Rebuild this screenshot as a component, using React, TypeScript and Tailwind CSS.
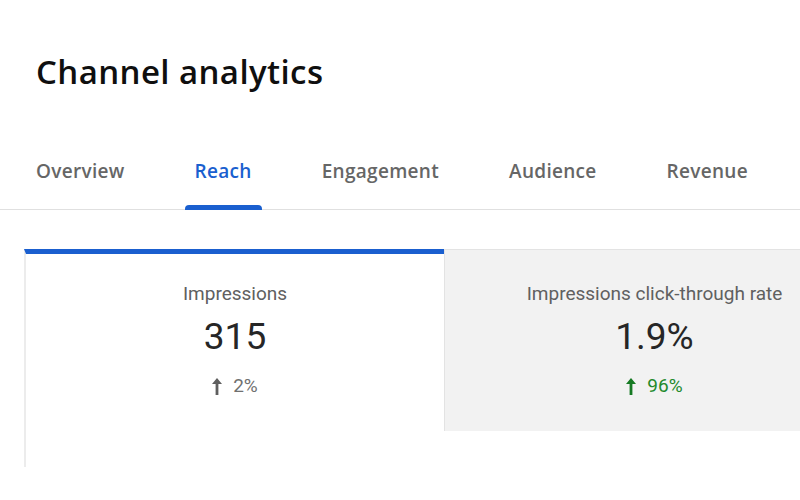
import React from 'react';

const tabs = ['Overview', 'Reach', 'Engagement', 'Audience', 'Revenue'];

function ArrowUp({ className }: { className?: string }) {
  return (
    <svg viewBox="0 0 10 17" className={className} fill="currentColor" aria-hidden>
      <path d="M5 0 L10 6 L6.4 6 L6.4 17 L3.6 17 L3.6 6 L0 6 Z" />
    </svg>
  );
}

type Metric = {
  label: string;
  value: string;
  delta: string;
  positive?: boolean;
};

function MetricBody({ m }: { m: Metric }) {
  return (
    <div className="flex flex-col items-center font-['Roboto',sans-serif]">
      <div className="text-[19px] leading-[24px] text-[#606060]">{m.label}</div>
      <div className="mt-[9px] text-[37px] leading-[44px] text-[#262626]">{m.value}</div>
      <div
        className={
          m.positive
            ? 'mt-[15px] flex items-center gap-[11px] text-[19px] leading-[24px] text-[#238a2c]'
            : 'mt-[15px] flex items-center gap-[11px] text-[19px] leading-[24px] text-[#707070]'
        }
      >
        <ArrowUp
          className={m.positive ? 'h-[17px] w-[10px] text-[#167a23]' : 'h-[17px] w-[10px] text-[#5f5f5f]'}
        />
        <span>{m.delta}</span>
      </div>
    </div>
  );
}

export default function App() {
  const impressions: Metric = { label: 'Impressions', value: '315', delta: '2%' };
  const ctr: Metric = {
    label: 'Impressions click-through rate',
    value: '1.9%',
    delta: '96%',
    positive: true,
  };

  return (
    <div className="h-[500px] w-[800px] overflow-hidden bg-white font-['Open_Sans',sans-serif]">
      <h1 className="pl-[36px] pt-[52px] text-[33px] font-semibold leading-[40px] tracking-[0.4px] text-[#0f0f0f]">
        Channel analytics
      </h1>

      <nav className="mt-[67px] flex gap-[50px] border-b border-[#e0e0e0] pl-[26px]">
        {tabs.map((t) => {
          const active = t === 'Reach';
          return (
            <div
              key={t}
              className={
                active
                  ? 'relative px-[10px] pb-[26px] text-[19px] font-semibold leading-[24px] tracking-[0.3px] text-[#1a5fcf]'
                  : 'relative px-[10px] pb-[26px] text-[19px] font-semibold leading-[24px] tracking-[0.3px] text-[#666666]'
              }
            >
              {t}
              {active && (
                <span className="absolute bottom-[-1px] left-0 right-0 h-[5px] rounded-t-[4px] bg-[#1a5fcf]" />
              )}
            </div>
          );
        })}
      </nav>

      <div className="mt-[39px] flex pl-[24px]">
        <div className="h-[218px] w-[420px] shrink-0 border-l-2 border-t-[5px] border-l-[#ececec] border-t-[#1a5fcf] bg-white pt-[28px]">
          <MetricBody m={impressions} />
        </div>
        <div className="h-[182px] w-[420px] shrink-0 border-l border-t border-[#e3e3e3] bg-[#f2f2f2] pt-[32px]">
          <MetricBody m={ctr} />
        </div>
      </div>
    </div>
  );
}
